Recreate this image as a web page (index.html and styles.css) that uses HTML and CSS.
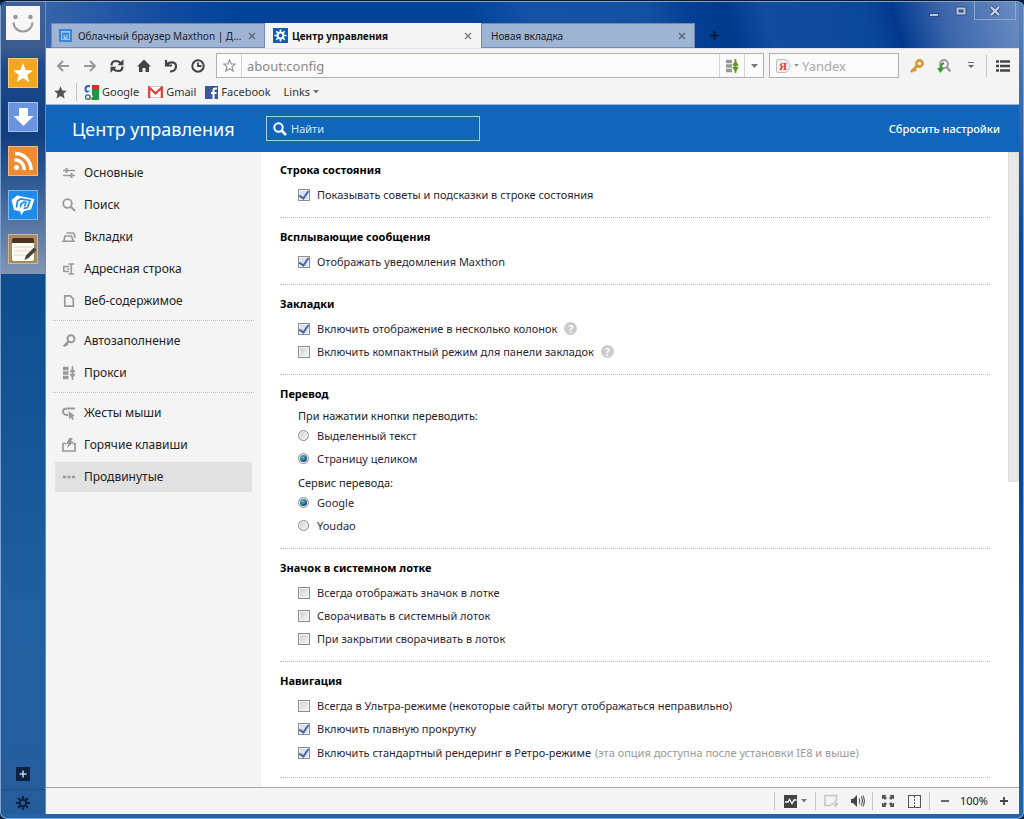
FILE: index.html
```html
<!DOCTYPE html>
<html lang="ru">
<head>
<meta charset="utf-8">
<title>Центр управления</title>
<link rel="stylesheet" href="styles.css">
</head>
<body>
<div class="window">
  <aside class="rail">
    <div class="rail-top">
      <button class="avatar" aria-label="Профиль"><svg width="34" height="34" viewBox="0 0 34 34"><circle cx="9.500" cy="11" r="2.300" fill="#999"/><circle cx="24.500" cy="11" r="2.300" fill="#999"/><path d="M7.500 16.500a9.500 9 0 0 0 19 0" fill="none" stroke="#999" stroke-width="2.200"/></svg></button>
      <button class="app app-star" aria-label="Избранное"><svg width="28" height="28" viewBox="0 0 28 28"><path d="M14 4l2.700 7.100 7.300.3-5.800 4.500 2.100 7.300L14 19l-6.300 4.200 2.100-7.300L4 11.400l7.300-.3z" fill="#fff"/></svg></button>
      <button class="app app-down" aria-label="Загрузки"><svg width="28" height="28" viewBox="0 0 28 28"><path d="M10 5h9v8h5.500L14.500 23 4.500 13H10z" fill="#fff"/></svg></button>
      <button class="app app-rss" aria-label="RSS"><svg width="28" height="28" viewBox="0 0 28 28"><circle cx="7.500" cy="20.500" r="2.500" fill="#fff"/><path d="M5.500 13a9 9 0 0 1 9.500 10M6 6.500A16 16 0 0 1 22 23" fill="none" stroke="#fff" stroke-width="3.500"/></svg></button>
      <button class="app app-chat" aria-label="Чат"><svg width="28" height="28" viewBox="0 0 28 28"><path d="M2.500 9L8 4.500 25.500 8 22 18.500 15 20l-3 4.500-.5-4L5 19z" fill="#fff"/><path d="M7.500 16.500l1-6.500 3-2 9.500 1.500-2.500 7-4 1M11.500 16.500l.5-3.500 3-2 2 .5-1.500 4" fill="none" stroke="#1f8be8" stroke-width="1.700"/></svg></button>
      <button class="app app-note" aria-label="Заметки"><svg width="28" height="28" viewBox="0 0 28 28"><rect x="3" y="4" width="22" height="22" rx="2" fill="#fcfaf4"/><path d="M3 8V5a2 2 0 0 1 2-2h18a2 2 0 0 1 2 2v3z" fill="#4a3320"/><path d="M5 12h18M5 16h15M5 20h11" stroke="#ddd6c4"/><path d="M15.500 25l1.500-4.500 8-8 2.500 2.500-8 8z" fill="#453e38"/></svg></button>
    </div>
    <div class="rail-bottom">
      <button class="rail-add" aria-label="Добавить"><svg width="14" height="14" viewBox="0 0 14 14"><path d="M7 3.500v7M3.500 7h7" stroke="#bcd0e8" stroke-width="1.600"/></svg></button>
      <button class="rail-gear" aria-label="Настройки"><svg width="14" height="14" viewBox="0 0 14 14"><circle cx="7" cy="7" r="3.300" fill="none" stroke="#0b2240" stroke-width="2.200"/><path d="M7 0v3M7 11v3M0 7h3M11 7h3M2.100 2.100l2 2M9.900 9.900l2 2M2.100 11.900l2-2M9.900 4.100l2-2" stroke="#0b2240" stroke-width="2.200"/></svg></button>
    </div>
  </aside>

  <div class="browser">
    <header class="titlebar">
      <div class="tabs">
        <div class="tab">
          <svg width="13" height="13" viewBox="0 0 13 13"><rect x="1" y="1" width="11" height="11" fill="#9cc4ee" stroke="#2b80d8" stroke-width="1.800"/><path d="M3.800 10V4.500h5.400V10M6.500 4.500v3" fill="none" stroke="#2b80d8" stroke-width="1.300"/></svg>
          <span class="tab-title">Облачный браузер Maxthon | Д...</span>
          <button class="close" aria-label="Закрыть"><svg width="8" height="8" viewBox="0 0 8 8"><path d="M1 1l6 6M7 1L1 7" stroke="#5a6474" stroke-width="1.300"/></svg></button>
        </div>
        <div class="tab tab-active">
          <svg width="15" height="15" viewBox="0 0 15 15"><rect width="15" height="15" fill="#0e5fb4"/><circle cx="7.500" cy="7.500" r="2.900" fill="none" stroke="#fff" stroke-width="2"/><path d="M7.500 1.500v2.500M7.500 11v2.500M1.500 7.500H4M11 7.500h2.500M3.300 3.300L5 5M10 10l1.700 1.700M3.300 11.700L5 10M10 5l1.700-1.700" stroke="#fff" stroke-width="1.600"/></svg>
          <span class="tab-title">Центр управления</span>
          <button class="close" aria-label="Закрыть"><svg width="8" height="8" viewBox="0 0 8 8"><path d="M1 1l6 6M7 1L1 7" stroke="#777" stroke-width="1.300"/></svg></button>
        </div>
        <div class="tab">
          <span class="tab-title">Новая вкладка</span>
          <button class="close" aria-label="Закрыть"><svg width="8" height="8" viewBox="0 0 8 8"><path d="M1 1l6 6M7 1L1 7" stroke="#5a6474" stroke-width="1.300"/></svg></button>
        </div>
        <button class="newtab" aria-label="Новая вкладка"><svg width="11" height="11" viewBox="0 0 11 11"><path d="M5.500 1v9M1 5.500h9" stroke="#0a1a38" stroke-width="2"/></svg></button>
      </div>
      <div class="controls">
        <button class="control" aria-label="Свернуть"><svg width="12" height="12" viewBox="0 0 12 12"><rect x="1.500" y="8.500" width="9" height="3" fill="#b9c9e0" stroke="#2b4a7c"/></svg></button>
        <button class="control" aria-label="Развернуть"><svg width="12" height="12" viewBox="0 0 12 12"><rect x="2.500" y="3.500" width="7" height="5" fill="none" stroke="#2b4a7c" stroke-width="4"/><rect x="2.500" y="3.500" width="7" height="5" fill="none" stroke="#b9c9e0" stroke-width="2"/></svg></button>
        <button class="control control-close" aria-label="Закрыть окно"><svg width="12" height="12" viewBox="0 0 12 12"><path d="M2 2l8 8M10 2l-8 8" stroke="#40598c" stroke-width="4"/><path d="M2 2l8 8M10 2l-8 8" stroke="#c9d6e8" stroke-width="2"/></svg></button>
      </div>
    </header>

    <div class="toolbar">
      <button class="tool" aria-label="Назад"><svg width="14" height="14" viewBox="0 0 14 14"><path d="M13 7H2.500M7 2L2 7l5 5" fill="none" stroke="#999" stroke-width="2"/></svg></button>
      <button class="tool" aria-label="Вперёд"><svg width="14" height="14" viewBox="0 0 14 14"><path d="M1 7h10.500M7 2l5 5-5 5" fill="none" stroke="#999" stroke-width="2"/></svg></button>
      <button class="tool" aria-label="Обновить"><svg width="14" height="14" viewBox="0 0 14 14"><path d="M1.500 6.500C1.500 3 3.500 2 6 2q2.500 0 4.500 2M12.500 7.500c0 3.500-2 4.500-4.500 4.500q-2.500 0-4.500-2" fill="none" stroke="#444" stroke-width="2.200"/><path d="M7.500 6.300h6V.3zM6.500 7.700h-6v6z" fill="#444"/></svg></button>
      <button class="tool" aria-label="Домой"><svg width="14" height="14" viewBox="0 0 14 14"><path d="M7 .5l7 7h-2V13H8.500V9h-3v4H2V7.500H0z" fill="#444"/></svg></button>
      <button class="tool" aria-label="Отменить"><svg width="14" height="14" viewBox="0 0 14 14"><path d="M2 1v5.500h6M2.500 6C5 2.500 12 2 12 7.500c0 3-2.500 5-6 5" fill="none" stroke="#444" stroke-width="2.200"/></svg></button>
      <button class="tool" aria-label="История"><svg width="14" height="14" viewBox="0 0 14 14"><circle cx="7" cy="7" r="5.700" fill="none" stroke="#444" stroke-width="2"/><path d="M7 3.500V7h3.500" fill="none" stroke="#444" stroke-width="1.800"/></svg></button>
      <div class="address">
        <button class="fav" aria-label="В избранное"><svg width="13" height="13" viewBox="0 0 14 14"><path d="M7 1l1.800 4.200 4.500.3-3.500 3 1.200 4.500L7 10.500 3 13l1.200-4.500-3.500-3 4.500-.3z" fill="none" stroke="#999" stroke-width="1.300"/></svg></button>
        <input class="address-input" type="text" placeholder="about:config" aria-label="Адрес">
        <button class="proxy" aria-label="Прокси"><svg width="14" height="14" viewBox="0 0 14 14"><path d="M1 2.500h6M1 7h6M1 11.500h6" stroke="#999" stroke-width="3.500"/><path d="M10.500 0v14M7.800 6h5.400M7.800 8.500h5.400" stroke="#5b981b" stroke-width="1.600"/><path d="M10.500 1.500l3 4.500h-6zM10.500 13l3-4.500h-6z" fill="#5b981b"/></svg></button>
        <button class="drop" aria-label="Список адресов"><svg width="7" height="4" viewBox="0 0 7 4"><path d="M0 0h7L3.500 4z" fill="#777"/></svg></button>
      </div>
      <div class="search">
        <button class="engine" aria-label="Поисковая система"><svg width="15" height="14" viewBox="0 0 15 14"><path d="M2 .5h7q1.500 0 2.500 1.500l3 5-3 5q-1 1.500-2.500 1.500H2Q.5 13.500.5 12V2Q.5.500 2 .5z" fill="#f2f2f2" stroke="#bbb"/><text x="3" y="11" class="ya">Я</text></svg><svg width="5" height="3" viewBox="0 0 5 3"><path d="M0 0h5L2.500 3z" fill="#999"/></svg></button>
        <input class="search-input" type="text" placeholder="Yandex" aria-label="Поиск Yandex">
      </div>
      <button class="tool" aria-label="Пароли"><svg width="14" height="14" viewBox="0 0 14 14"><circle cx="9.500" cy="4.500" r="3.100" fill="none" stroke="#d9962c" stroke-width="2.600"/><path d="M7 7l-6 6M3.500 9.500l2.500 2.500" stroke="#d9962c" stroke-width="2.600"/></svg></button>
      <button class="tool" aria-label="Сниффер"><svg width="14" height="14" viewBox="0 0 14 14"><circle cx="7" cy="5" r="4" fill="none" stroke="#999" stroke-width="1.800"/><path d="M9.500 8l4 4.500" stroke="#999" stroke-width="2.400"/><path d="M7 4q-4 1-3.500 8" fill="none" stroke="#3c963c" stroke-width="2.200"/><path d="M0 9l3.500 5L7 9z" fill="#3c963c"/></svg></button>
      <button class="tool" aria-label="Ещё"><svg width="6" height="7" viewBox="0 0 6 7"><path d="M0 .5h6" stroke="#666"/><path d="M0 3h6L3 6z" fill="#666"/></svg></button>
      <span class="sep"></span>
      <button class="tool" aria-label="Меню"><svg width="14" height="12" viewBox="0 0 14 12"><path d="M0 1.500h3M4 1.500h10M0 6h3M4 6h10M0 10.500h3M4 10.500h10" stroke="#444" stroke-width="2.600"/></svg></button>
    </div>

    <nav class="bookmarks" aria-label="Панель закладок">
      <button class="bookmark-star" aria-label="Закладки"><svg width="13" height="13" viewBox="0 0 14 14"><path d="M7 .3l2 4.500 4.900.4-3.700 3.200 1.200 5L7 10.800l-4.400 2.600 1.200-5L.1 5.200 5 4.800z" fill="#555"/></svg></button>
      <span class="sep sep-short"></span>
      <a class="bookmark" href="#"><svg width="15" height="15" viewBox="0 0 15 15"><path d="M6 0h9v5H6z" fill="#dc2d22"/><path d="M8 5h7v9q0 1-1 1H8z" fill="#169a4a"/><path d="M3 9h5v6H3z" fill="#f3b61c"/><circle cx="4.500" cy="4" r="3" fill="#fff" stroke="#2b61c9" stroke-width="2"/><path d="M7 0v6.500L4 8.500q4 1 4 3.500" fill="none" stroke="#fff" stroke-width="1.800"/><circle cx="3.800" cy="12" r="2.200" fill="#fff" stroke="#2b61c9" stroke-width="1.300"/></svg>Google</a>
      <a class="bookmark" href="#"><svg width="15" height="12" viewBox="0 0 15 12"><rect x=".5" y=".5" width="14" height="11" fill="#fff" stroke="#ddc5c3"/><path d="M1.200 12V1.500L7.500 7.500l6.300-6V12" fill="none" stroke="#dd4037" stroke-width="2.200"/></svg>Gmail</a>
      <a class="bookmark" href="#"><svg width="13" height="13" viewBox="0 0 13 13"><rect width="13" height="13" fill="#3a589b"/><path d="M12 2.500h-1.500q-2 0-2 2V13M6 7h5.500" fill="none" stroke="#fff" stroke-width="2"/></svg>Facebook</a>
      <button class="bookmark bookmark-menu">Links<svg width="6" height="4" viewBox="0 0 6 4"><path d="M0 0h6L3 3.500z" fill="#777"/></svg></button>
    </nav>

    <div class="page-head">
      <h1 class="page-title">Центр управления</h1>
      <label class="find"><svg width="14" height="14" viewBox="0 0 14 14"><circle cx="5.500" cy="5.500" r="4.200" fill="none" stroke="#fff" stroke-width="2"/><path d="M8.500 8.500l4.500 4.500" stroke="#fff" stroke-width="2.600"/></svg><input class="find-input" type="text" placeholder="Найти" aria-label="Найти"></label>
      <a class="reset" href="#">Сбросить настройки</a>
    </div>

    <div class="page">
      <nav class="nav" aria-label="Разделы">
        <div class="nav-group">
          <a class="nav-item" href="#"><svg width="14" height="14" viewBox="0 0 14 14"><path d="M1 4.500h12M1 9.500h12" stroke="#999" stroke-width="1.600"/><path d="M4.500 2v5M9.500 7v5" stroke="#999" stroke-width="2"/></svg>Основные</a>
          <a class="nav-item" href="#"><svg width="14" height="14" viewBox="0 0 14 14"><circle cx="5.500" cy="5.500" r="4.300" fill="none" stroke="#999" stroke-width="1.800"/><path d="M8.500 8.500l4.500 4.500" stroke="#999" stroke-width="2"/></svg>Поиск</a>
          <a class="nav-item" href="#"><svg width="14" height="14" viewBox="0 0 14 14"><path d="M0 11.200h13M2 10.500l1-4.500h6.500L11 10.500M4.500 3h6.500q1 0 1.300 1.500L13 8" fill="none" stroke="#999" stroke-width="1.600"/></svg>Вкладки</a>
          <a class="nav-item" href="#"><svg width="14" height="14" viewBox="0 0 14 14"><path d="M7 4.500H1.800V9.500H7M5 7h2M6.500 2h5.500M6.500 12h5.500M9.300 2v10" fill="none" stroke="#999" stroke-width="1.600"/></svg>Адресная строка</a>
          <a class="nav-item" href="#"><svg width="14" height="14" viewBox="0 0 14 14"><path d="M2.800 1.800h5.500l3 3v7.400H2.800z" fill="none" stroke="#999" stroke-width="1.700"/></svg>Веб-содержимое</a>
        </div>
        <div class="nav-group">
          <a class="nav-item" href="#"><svg width="14" height="14" viewBox="0 0 14 14"><circle cx="9" cy="4.800" r="3.500" fill="none" stroke="#999" stroke-width="2"/><path d="M6.500 7.500L1.500 12.500M3.500 9.500l2 2" stroke="#999" stroke-width="2.400"/></svg>Автозаполнение</a>
          <a class="nav-item" href="#"><svg width="14" height="14" viewBox="0 0 14 14"><path d="M1 2.500h5.500M1 7h5.500M1 11.500h5.500" stroke="#999" stroke-width="3.400"/><path d="M10.500 0v14M8 5.500h5M8 8.500h5" stroke="#999" stroke-width="1.500"/><path d="M10.500 2l2.500 3.500H8zM10.500 12.500l2.500-4H8z" fill="#999"/></svg>Прокси</a>
        </div>
        <div class="nav-group">
          <a class="nav-item" href="#"><svg width="14" height="14" viewBox="0 0 14 14"><path d="M13 2.500H5Q1 2.500 1 5.500T5 9h1" fill="none" stroke="#999" stroke-width="2"/><path d="M6.500 5l6.500 5-2.500.5 1.500 2.500-1.500 1L9 11.500 7 13z" fill="#999"/></svg>Жесты мыши</a>
          <a class="nav-item" href="#"><svg width="14" height="14" viewBox="0 0 14 14"><path d="M4 5.500H1V13h12V5.500h-2.500" fill="none" stroke="#999" stroke-width="1.700"/><path d="M7.500 0H11L9 3.500h2.500L5 10.500l1.500-4.500H4z" fill="#999"/></svg>Горячие клавиши</a>
          <a class="nav-item nav-active" href="#" aria-current="page"><svg width="14" height="14" viewBox="0 0 14 14"><path d="M1 7h3M5.500 7h3M10 7h3" stroke="#999" stroke-width="2.400"/></svg>Продвинутые</a>
        </div>
      </nav>

      <main class="settings">
        <section class="section">
          <h2 class="section-title">Строка состояния</h2>
          <label class="option"><input class="check" type="checkbox" checked>Показывать советы и подсказки в строке состояния</label>
        </section>
        <section class="section">
          <h2 class="section-title">Всплывающие сообщения</h2>
          <label class="option"><input class="check" type="checkbox" checked>Отображать уведомления Maxthon</label>
        </section>
        <section class="section">
          <h2 class="section-title">Закладки</h2>
          <label class="option"><input class="check" type="checkbox" checked>Включить отображение в несколько колонок<span class="help">?</span></label>
          <label class="option"><input class="check" type="checkbox">Включить компактный режим для панели закладок<span class="help">?</span></label>
        </section>
        <section class="section">
          <h2 class="section-title">Перевод</h2>
          <div role="radiogroup" aria-labelledby="what">
            <p class="caption" id="what">При нажатии кнопки переводить:</p>
            <label class="option"><input class="radio" type="radio" name="what">Выделенный текст</label>
            <label class="option"><input class="radio" type="radio" name="what" checked>Страницу целиком</label>
          </div>
          <div class="subgroup" role="radiogroup" aria-labelledby="service">
            <p class="caption" id="service">Сервис перевода:</p>
            <label class="option"><input class="radio" type="radio" name="service" checked>Google</label>
            <label class="option"><input class="radio" type="radio" name="service">Youdao</label>
          </div>
        </section>
        <section class="section">
          <h2 class="section-title">Значок в системном лотке</h2>
          <label class="option"><input class="check" type="checkbox">Всегда отображать значок в лотке</label>
          <label class="option"><input class="check" type="checkbox">Сворачивать в системный лоток</label>
          <label class="option"><input class="check" type="checkbox">При закрытии сворачивать в лоток</label>
        </section>
        <section class="section">
          <h2 class="section-title">Навигация</h2>
          <label class="option"><input class="check" type="checkbox">Всегда в Ультра-режиме (некоторые сайты могут отображаться неправильно)</label>
          <label class="option"><input class="check" type="checkbox" checked>Включить плавную прокрутку</label>
          <label class="option option-tall"><input class="check" type="checkbox" checked>Включить стандартный рендеринг в Ретро-режиме<span class="hint">(эта опция доступна после установки IE8 и выше)</span></label>
        </section>
      </main>
      <div class="scrollbar"><div class="thumb"></div></div>
    </div>

    <footer class="status">
      <span class="sep sep-short"></span>
      <button class="stat stat-wide" aria-label="Монитор"><svg width="13" height="13" viewBox="0 0 13 13"><rect width="13" height="13" fill="#444"/><path d="M1 7h3l1.500-2.500L8 8.500 10 5h2.500" fill="none" stroke="#fff" stroke-width="1.300"/></svg><svg width="6" height="4" viewBox="0 0 6 4"><path d="M0 0h6L3 3.500z" fill="#777"/></svg></button>
      <span class="sep sep-short"></span>
      <button class="stat" aria-label="Открыть рядом"><svg width="14" height="14" viewBox="0 0 14 14"><path d="M7 11.500H1v-10h11.500V7M7 10h6M10.500 7l3 3-3 3" fill="none" stroke="#c4c4c4" stroke-width="1.500"/></svg></button>
      <button class="stat" aria-label="Звук"><svg width="14" height="12" viewBox="0 0 14 12"><path d="M0 4h2l4-4v12L2 8H0z" fill="#444"/><path d="M8 3.500q1.500 2.500 0 5M10 1.500q3 4.500 0 9M11.800.500q3.200 5.500 0 11" fill="none" stroke="#555" stroke-width="1.100"/></svg></button>
      <span class="sep sep-short"></span>
      <button class="stat" aria-label="Полный экран"><svg width="12" height="12" viewBox="0 0 12 12"><path d="M0 0h4.500L3.300 1.300 5 3 3 5 1.300 3.300 0 4.500zM12 0v4.500l-1.300-1.200L9 5 7 3l1.700-1.700L7.500 0zM0 12V7.500l1.300 1.200L3 7l2 2-1.700 1.700L4.500 12zM12 12H7.500l1.200-1.300L7 9l2-2 1.700 1.700L12 7.500z" fill="#555"/></svg></button>
      <button class="stat" aria-label="Разделить экран"><svg width="13" height="13" viewBox="0 0 13 13"><rect x=".5" y=".5" width="12" height="12" fill="none" stroke="#555"/><path d="M6.500 1v11" stroke="#555" stroke-dasharray="2 1"/></svg></button>
      <span class="sep sep-short"></span>
      <button class="stat" aria-label="Уменьшить"><svg width="8" height="8" viewBox="0 0 8 8"><path d="M0 4h8" stroke="#444" stroke-width="1.600"/></svg></button>
      <span class="zoom">100%</span>
      <button class="stat" aria-label="Увеличить"><svg width="8" height="8" viewBox="0 0 8 8"><path d="M0 4h8M4 0v8" stroke="#444" stroke-width="1.800"/></svg></button>
    </footer>
  </div>
</div>
</body>
</html>
```
FILE: styles.css
```css
* { box-sizing: border-box; }

body {
  margin: 0;
  background: #071a38;
  color: #222;
  font: 11px/18px "Noto Sans", "Open Sans", sans-serif;
}

button {
  margin: 0;
  padding: 0;
  border: 0;
  background: none;
  color: inherit;
  font: inherit;
}

button, .tab, .nav-item, .bookmark, .find { display: flex; align-items: center; }
button { justify-content: center; }
a { color: inherit; text-decoration: none; }
svg { flex: none; }

input[type="text"] {
  flex: 1;
  min-width: 0;
  padding: 0;
  border: 0;
  outline: 0;
  background: none;
  color: inherit;
  font: inherit;
}

input::placeholder { color: inherit; opacity: 1; }

/* Window frame */
.window {
  display: flex;
  height: 100vh;
  padding: 1px 5px 5px 1px;
  border: 1px solid #0c1b34;
  border-width: 1px 0 0;
  border-radius: 7px;
  background: linear-gradient(#5f83b8, #0b4794 30%, #0d4794 60%, #2264a8);
  box-shadow: inset 0 0 0 1px #7fa3d0;
}

/* Left rail */
.rail {
  display: flex;
  flex: none;
  flex-direction: column;
  justify-content: space-between;
  width: 45px;
  border-right: 1px solid #6d89b0;
  background: linear-gradient(#0d4a90, #0d4d90 35%, #2060a0 75%, #265c9c);
}

.rail-top {
  display: flex;
  flex-direction: column;
  align-items: center;
  gap: 14px;
  height: 272px;
  padding-top: 4px;
  border-radius: 6px 0 0 0;
  background: linear-gradient(#405f94, #3d5c8e 16%, #1c4a8c 24%, #103f80 48%, #2f5a94 66%, #8396b2);
}

.avatar { width: 34px; height: 34px; margin-bottom: 4px; background: #f7f7f7; }
.app { width: 30px; height: 30px; border: 1px solid #ffffff66; }
.app-star { background: #f3a71e; }
.app-down { background: #6b93df; }
.app-rss { background: #f18b32; }
.app-chat { background: #1f8be8; }
.app-note { background: #a98a60; }

.rail-bottom { display: flex; flex-direction: column; align-items: center; }
.rail-add { width: 14px; height: 14px; margin-bottom: 8px; background: #0b2240; }
.rail-gear { width: 100%; height: 25px; padding-top: 2px; border-top: 1px solid #1d4f88; }

.browser { display: flex; flex: 1; flex-direction: column; min-width: 0; }

/* Title bar */
.titlebar {
  display: flex;
  justify-content: space-between;
  height: 46px;
  border-radius: 0 6px 0 0;
  background: linear-gradient(75deg, #3a66ac, #154da0 12%, #02439a 20%, #02439a 44%, #1552a6 50%, #1450a2 62%, #053f94 66%, #013a8c 70%, #124c9e 74%, #0c489a 84%, #02398e 87%, #3c66ab 92%, #6b8dc2);
}

.tabs { display: flex; flex: 1; align-items: flex-end; min-width: 0; padding-left: 5px; }

.tab {
  flex: 0 1 214px;
  gap: 4px;
  min-width: 0;
  height: 25px;
  padding: 0 7px;
  border: 1px solid #6f8bb8;
  background: #9fb3d2;
  font-size: 10px;
}

.tab-active { flex-basis: 216px; border-color: #f4f4f4; background: #f4f4f4; color: #111; font-weight: 700; }
.tab-title { flex: 1; padding-left: 2px; white-space: nowrap; }
.tab-active .tab-title { padding: 0; }
.close { width: 10px; height: 16px; }
.newtab { width: 38px; height: 26px; }

.controls { display: flex; align-items: flex-start; padding-right: 3px; }
.control { width: 27px; height: 18px; }
.control-close { width: 42px; border: 1px solid #8fa8d0; border-top: 0; }

/* Toolbars */
.toolbar { display: flex; align-items: center; height: 34px; padding: 0 3px; border-top: 1px solid #dfe5ee; background: #f4f4f4; }
.tool { flex: none; width: 27px; height: 24px; }
.sep { flex: none; width: 1px; height: 22px; margin: 0 2px; background: #c4c4c4; }
.sep-short { height: 18px; }

.address, .search {
  display: flex;
  align-items: stretch;
  height: 25px;
  border: 1px solid #b0b0b0;
  background: #fbfbfb;
  color: #888;
  font-size: 13px;
}

.address { flex: 1; min-width: 0; margin: 0 5px; }
.fav { width: 25px; border-right: 1px solid #d4d4d4; }
.address .address-input { padding-left: 5px; }
.proxy { width: 26px; border: 1px solid #d4d4d4; border-width: 0 1px; }
.drop { width: 18px; }
.search { flex: 0 1 130px; min-width: 60px; margin-right: 4px; color: #aaa; }
.engine { gap: 3px; width: 32px; padding-left: 2px; }
.ya { fill: #e23b3b; font: 700 11px "Liberation Serif", serif; }

.bookmarks { display: flex; align-items: center; height: 23px; padding-bottom: 2px; border-bottom: 1px solid #9fb6d2; background: #f4f4f4; color: #333; }
.bookmark-star { width: 28px; }
.bookmark { gap: 3px; margin-right: 9px; }
.bookmarks .sep { margin: 0 7px 0 2px; }
.bookmark-menu { margin-left: 4px; }

/* Page header */
.page-head { display: flex; flex: none; align-items: center; height: 47px; padding: 0 19px 0 26px; background: #1166bc; color: #fff; }
.page-title { flex: 0 0 194px; margin: 0; font-size: 18px; font-weight: 400; line-height: 24px; white-space: nowrap; }
.find { flex: 0 1 214px; gap: 4px; height: 25px; padding: 0 6px; border: 1px solid #a9cbec; color: #d8e7f6; }
.reset { margin-left: auto; font-weight: 500; white-space: nowrap; }

/* Page body */
.page { display: flex; flex: 1; min-height: 0; background: #fff; }
.nav { flex: none; width: 215px; padding: 6px 7px 0; background: #f4f4f4; font-size: 12px; }
.nav-group { display: flex; flex-direction: column; gap: 2px; padding: 0 2px; }
.nav-group + .nav-group { margin-top: 4px; padding-top: 5px; border-top: 1px dotted #bbb; }
.nav-item { gap: 8px; height: 30px; padding: 0 7px; }
.nav-active { background: #e1e1e1; }

.settings { flex: 1; min-width: 0; overflow: hidden; padding: 0 18px 0 19px; }
.section { padding: 10px 0 11px; border-bottom: 1px dotted #bbb; }
.section:first-child { padding-top: 9px; }
.section-title { margin: 0 0 4px; color: #000; font-size: 11px; font-weight: 700; line-height: 18px; }
.caption { margin: 0; padding-left: 18px; line-height: 17px; }
.subgroup { margin-top: 4px; }
.option { display: flex; align-items: center; height: 23px; padding-left: 18px; color: #2d1f33; }
.option-tall { height: 26px; }
.hint { margin-left: 4px; color: #999; }
.help { display: flex; align-items: center; justify-content: center; width: 13px; height: 13px; margin-left: 7px; border-radius: 50%; background: #ccc; color: #fff; font-size: 10px; font-weight: 700; line-height: 12px; }

.check, .radio {
  display: flex;
  flex: none;
  appearance: none;
  align-items: center;
  justify-content: center;
  width: 12px;
  height: 12px;
  margin: 0 7px 0 0;
  border: 1px solid #8c8c8c;
  background: linear-gradient(135deg, #cfcfcf, #f7f7f7);
  box-shadow: inset 0 0 0 1px #f4f4f4;
}

.check:checked { background: #d9e2f2; }
.check:checked::before { content: ""; width: 4px; height: 8px; margin-bottom: 2px; border: solid #4a62a8; border-width: 0 2px 2px 0; transform: rotate(35deg); }
.radio { width: 11px; height: 11px; margin: 0 8px 0 0; border-radius: 50%; }
.radio:checked::before { content: ""; width: 7px; height: 7px; border-radius: 50%; background: radial-gradient(circle at 40% 35%, #66bde0, #15506f 65%); }

.scrollbar { flex: none; width: 11px; background: #fff; }
.thumb { height: 52%; border: 1px solid #dcdcdc; background: #e8e8e8; }

/* Status bar */
.status { display: flex; flex: none; align-items: center; justify-content: flex-end; height: 27px; padding-right: 2px; border-top: 1px solid #a4a4a4; background: #f4f4f4; }
.stat { width: 27px; height: 22px; }
.stat-wide { gap: 4px; width: 38px; }
.status .sep { margin: 0 1px; }
.zoom { width: 32px; text-align: center; }
```
